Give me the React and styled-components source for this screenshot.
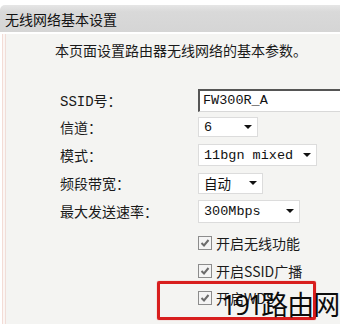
import React from 'react'
import styled, { createGlobalStyle } from 'styled-components'

let GlobalStyle = createGlobalStyle`
  html, body {
    margin: 0;
    padding: 0;
    background: #f4f4f2;
  }
  body {
    width: 340px;
    height: 324px;
    overflow: hidden;
    font-family: "Noto Sans CJK SC", "Noto Sans", sans-serif;
    color: #1e1e1e;
  }
`

let Page = styled.div`
  position: relative;
  width: 340px;
  height: 324px;
  padding-top: 5px;
  box-sizing: border-box;
  background: #fff;
  overflow: hidden;
`

let Header = styled.div`
  height: 27px;
  display: flex;
  align-items: center;
  padding-left: 5px;
  border-radius: 5px 0 0 0;
  background: linear-gradient(#e6e6e6, #d9d9d9 25%, #d5d5d5);
  font-size: 14px;
  color: #111;
`

let Body = styled.div`
  height: 292px;
  margin-top: 2px;
  padding-left: 55px;
  background: #f4f4f2;
  box-shadow: inset 2px 0 #fff, inset 3px 0 #f3dcd6, inset 5px 0 #fbf6f4, inset 6px 0 #f1ddd8;
`

let Intro = styled.div`
  padding-top: 6px;
  height: 20px;
  line-height: 20px;
  font-size: 14px;
  color: #1a1a1a;
`

let Form = styled.div`
  margin-top: 27px;
  padding-left: 5px;
`

let Row = styled.div`
  display: grid;
  grid-template-columns: 138px auto;
  align-items: center;
  height: ${props => props.$h || 28}px;
`

let Label = styled.span`
  font-family: "Liberation Mono", "Noto Sans CJK SC", monospace;
  font-size: 14px;
  color: #1a1a1a;
`

let Input = styled.div`
  width: 150px;
  height: 23px;
  box-sizing: border-box;
  padding-left: 3px;
  display: flex;
  align-items: center;
  background: #fff;
  border-top: 2px solid #555;
  border-left: 2px solid #555;
  border-bottom: 1px solid #d8d8d8;
  font-family: "Liberation Mono", monospace;
  font-size: 13.5px;
  color: #111;
`

let Select = styled.div`
  width: ${props => props.$w}px;
  height: ${props => props.$h}px;
  box-sizing: border-box;
  display: flex;
  align-items: center;
  justify-content: space-between;
  padding: 0 5px 0 5px;
  background: #fff;
  border: 1px solid #dcdcdc;
  font-family: "Liberation Mono", "Noto Sans CJK SC", monospace;
  font-size: 13.5px;
  color: #111;
`

let Arrow = styled.span`
  width: 0;
  height: 0;
  border-left: 4px solid transparent;
  border-right: 4px solid transparent;
  border-top: 4px solid #111;
`

let Checks = styled.div`
  margin-top: 4px;
  padding-left: 143px;
`

let CheckRow = styled.div`
  display: flex;
  align-items: center;
  gap: 4px;
  height: ${props => props.$h || 27}px;
  font-size: 14px;
  color: #1a1a1a;
`

let Box = styled.svg`
  width: 14px;
  height: 14px;
  flex: none;
`

let Mark = styled.div`
  position: absolute;
  left: 157px;
  top: 281px;
  width: 159px;
  height: 39px;
  box-sizing: border-box;
  border: 3.5px solid #d81e1e;
  border-radius: 2px;
  box-shadow: 0 0 1px #e05050;
`

let Watermark = styled.div`
  position: absolute;
  left: 221px;
  top: 286px;
  white-space: nowrap;
  font-size: 27px;
  line-height: 36px;
  letter-spacing: -1px;
  color: #0c0c0c;
  font-family: "Noto Sans CJK SC", "Noto Sans", sans-serif;
  span {
    font-family: "Open Sans", sans-serif;
    font-size: 27px;
    font-weight: 400;
    letter-spacing: -2px;
  }
`

function CheckBox() {
  return (
    <Box viewBox="0 0 14 14">
      <rect x="0.5" y="0.5" width="13" height="13" fill="#f4f4f4" stroke="#8c8c8c" />
      <path d="M3.5 7 L6 9.5 L10.5 4" fill="none" stroke="#6b6b6b" strokeWidth="2" />
    </Box>
  )
}

function Dropdown({ w, h, children }) {
  return (
    <Select $w={w} $h={h}>
      <span>{children}</span>
      <Arrow />
    </Select>
  )
}

export default function App() {
  return (
    <Page>
      <GlobalStyle />
      <Header>无线网络基本设置</Header>
      <Body>
        <Intro>本页面设置路由器无线网络的基本参数。</Intro>
        <Form>
          <Row $h={26}>
            <Label>SSID号：</Label>
            <Input>FW300R_A</Input>
          </Row>
          <Row>
            <Label>信道：</Label>
            <Dropdown w={60} h={20}>6</Dropdown>
          </Row>
          <Row>
            <Label>模式：</Label>
            <Dropdown w={119} h={22}>11bgn mixed</Dropdown>
          </Row>
          <Row>
            <Label>频段带宽：</Label>
            <Dropdown w={65} h={21}>自动</Dropdown>
          </Row>
          <Row>
            <Label>最大发送速率：</Label>
            <Dropdown w={102} h={23}>300Mbps</Dropdown>
          </Row>
        </Form>
        <Checks>
          <CheckRow $h={28}>
            <CheckBox />
            开启无线功能
          </CheckRow>
          <CheckRow>
            <CheckBox />
            开启SSID广播
          </CheckRow>
          <CheckRow>
            <CheckBox />
            开启WDS
          </CheckRow>
        </Checks>
      </Body>
      <Mark />
      <Watermark>
        <span>191</span>路由网
      </Watermark>
    </Page>
  )
}
